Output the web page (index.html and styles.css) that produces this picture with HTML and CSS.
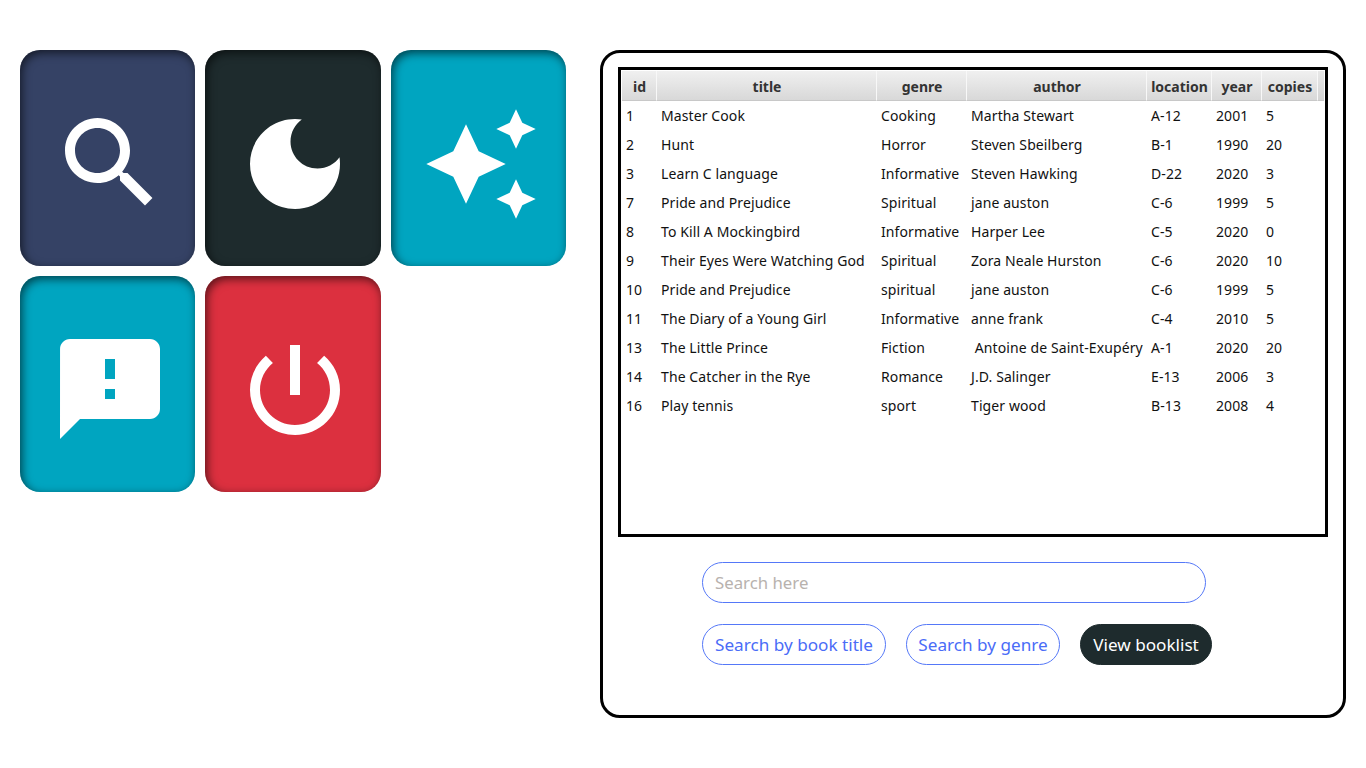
FILE: index.html
```html
<!DOCTYPE html>
<html lang="en">
<head>
<meta charset="utf-8">
<title>Library</title>
<link rel="stylesheet" href="styles.css">
</head>
<body>
<div class="app">
  <nav class="tiles">
    <a class="tile navy"><svg class="nudge" viewBox="0 0 24 24"><path d="M15.5 14h-.79l-.28-.27C15.41 12.59 16 11.11 16 9.5 16 5.91 13.09 3 9.5 3S3 5.91 3 9.5 5.91 16 9.5 16c1.61 0 3.09-.59 4.23-1.57l.27.28v.79l5 4.99L20.49 19l-4.99-5zm-6 0C7.01 14 5 11.99 5 9.5S7.01 5 9.5 5 14 7.01 14 9.5 11.99 14 9.5 14z"/></svg></a>
    <a class="tile dark"><svg viewBox="0 0 24 24"><path d="M12 3c-4.97 0-9 4.03-9 9s4.03 9 9 9 9-4.03 9-9c0-.46-.04-.92-.1-1.36-.98 1.37-2.58 2.26-4.4 2.26-2.98 0-5.4-2.42-5.4-5.4 0-1.81.89-3.42 2.26-4.4-.44-.06-.9-.1-1.36-.1z"/></svg></a>
    <a class="tile teal"><svg viewBox="0 0 120 120"><path d="M45 20.3 57.7 47.3 84.7 60 57.7 72.7 45 99.7 32.3 72.7 5.3 60 32.3 47.3zM95 5.3 101.3 18.7 114.7 25 101.3 31.3 95 44.7 88.7 31.3 75.3 25 88.7 18.7zM95 75.3 101.3 88.7 114.7 95 101.3 101.3 95 114.7 88.7 101.3 75.3 95 88.7 88.7z"/></svg></a>
    <a class="tile teal"><svg class="nudge" viewBox="0 0 24 24"><path d="M20 2H4c-1.1 0-1.99.9-1.99 2L2 22l4-4h14c1.1 0 2-.9 2-2V4c0-1.1-.9-2-2-2zm-7 12h-2v-2h2v2zm0-4h-2V6h2v4z"/></svg></a>
    <a class="tile red"><svg viewBox="0 0 24 24"><path d="M13 3h-2v10h2V3zm4.83 2.17l-1.42 1.42C17.99 7.86 19 9.81 19 12c0 3.87-3.13 7-7 7s-7-3.13-7-7c0-2.19 1.01-4.14 2.58-5.42L6.17 5.17C4.23 6.82 3 9.26 3 12c0 4.97 4.03 9 9 9s9-4.03 9-9c0-2.74-1.23-5.18-3.17-6.83z"/></svg></a>
  </nav>
  <main class="panel">
    <div class="frame">
      <table class="books">
        <colgroup>
          <col class="c-id"><col class="c-title"><col class="c-genre"><col class="c-author"><col class="c-loc"><col class="c-year"><col class="c-copies"><col>
        </colgroup>
        <thead>
          <tr><th>id</th><th>title</th><th>genre</th><th>author</th><th>location</th><th>year</th><th>copies</th><th></th></tr>
        </thead>
        <tbody>
          <tr><td>1</td><td>Master Cook</td><td>Cooking</td><td>Martha Stewart</td><td>A-12</td><td>2001</td><td>5</td><td></td></tr>
          <tr><td>2</td><td>Hunt</td><td>Horror</td><td>Steven Sbeilberg</td><td>B-1</td><td>1990</td><td>20</td><td></td></tr>
          <tr><td>3</td><td>Learn C language</td><td>Informative</td><td>Steven Hawking</td><td>D-22</td><td>2020</td><td>3</td><td></td></tr>
          <tr><td>7</td><td>Pride and Prejudice</td><td>Spiritual</td><td>jane auston</td><td>C-6</td><td>1999</td><td>5</td><td></td></tr>
          <tr><td>8</td><td>To Kill A Mockingbird</td><td>Informative</td><td>Harper Lee</td><td>C-5</td><td>2020</td><td>0</td><td></td></tr>
          <tr><td>9</td><td>Their Eyes Were Watching God</td><td>Spiritual</td><td>Zora Neale Hurston</td><td>C-6</td><td>2020</td><td>10</td><td></td></tr>
          <tr><td>10</td><td>Pride and Prejudice</td><td>spiritual</td><td>jane auston</td><td>C-6</td><td>1999</td><td>5</td><td></td></tr>
          <tr><td>11</td><td>The Diary of a Young Girl</td><td>Informative</td><td>anne frank</td><td>C-4</td><td>2010</td><td>5</td><td></td></tr>
          <tr><td>13</td><td>The Little Prince</td><td>Fiction</td><td> Antoine de Saint-Exupéry</td><td>A-1</td><td>2020</td><td>20</td><td></td></tr>
          <tr><td>14</td><td>The Catcher in the Rye</td><td>Romance</td><td>J.D. Salinger</td><td>E-13</td><td>2006</td><td>3</td><td></td></tr>
          <tr><td>16</td><td>Play tennis</td><td>sport</td><td>Tiger wood</td><td>B-13</td><td>2008</td><td>4</td><td></td></tr>
        </tbody>
      </table>
    </div>
    <form class="search">
      <input class="field" type="text" placeholder="Search here">
      <div class="actions">
        <button class="btn btn-title" type="button">Search by book title</button>
        <button class="btn btn-genre" type="button">Search by genre</button>
        <button class="btn btn-view" type="button">View booklist</button>
      </div>
    </form>
  </main>
</div>
</body>
</html>
```
FILE: styles.css
```css
* { box-sizing: border-box; }
html, body { margin: 0; height: 100%; background: #fff; overflow: hidden; }
body { font-family: "Noto Sans", "Open Sans", sans-serif; color: #111; }
.app { display: flex; gap: 34px; padding: 50px 20px; }
.tiles {
  width: 546px;
  display: grid;
  grid-template-columns: repeat(3, 1fr);
  grid-auto-rows: 216px;
  gap: 10px;
  align-content: start;
}
.tile {
  display: flex;
  align-items: center;
  justify-content: center;
  padding: 11px 0 0 5px;
  border-radius: 20px;
  box-shadow: inset 2px 3px 10px rgba(0, 0, 0, .6);
}
.tile svg { width: 120px; height: 120px; fill: #fff; flex: none; }
.tile .nudge { margin-top: -1px; }
.navy { background: #354265; }
.dark { background: #1e2b2d; }
.teal { background: #00a5c0; }
.red { background: #dc303f; }
.panel {
  width: 746px;
  height: 668px;
  border: 3px solid #000;
  border-radius: 20px;
  padding: 14px 15px;
}
.frame { height: 470px; border: 3px solid #000; padding: 1px; background: #fff; }
.books { width: 702px; border-collapse: separate; border-spacing: 0; table-layout: fixed; font-size: 14px; letter-spacing: .1px; }
.c-id { width: 35px; }
.c-title { width: 220px; }
.c-genre { width: 90px; }
.c-author { width: 180px; }
.c-loc { width: 65px; }
.c-year { width: 50px; }
.c-copies { width: 56px; }
.books th {
  height: 30px;
  padding: 2px 0 0 1px;
  font-size: 14px;
  font-weight: 700;
  letter-spacing: 0;
  color: #333;
  background: linear-gradient(#f0f0f0, #d8d8d8);
  border-right: 1px solid #f8f8f8;
  border-bottom: 1px solid #c8c8c8;
}
.books th:last-child { border-right: 0; background: linear-gradient(#e8e8e8, #d4d4d4); }
.books td { height: 29px; padding: 0 0 0 4px; white-space: pre; overflow: visible; }
.search { margin: 25px 0 0 84px; }
.field {
  display: block;
  width: 504px;
  height: 41px;
  padding: 0 12px;
  border: 1px solid #5578f8;
  border-radius: 21px;
  outline: none;
  font: 16.8px "Noto Sans", sans-serif;
}
.field::placeholder { color: #b8b2ae; opacity: 1; }
.actions { display: flex; gap: 20px; margin-top: 21px; }
.btn {
  height: 41px;
  padding: 0;
  border: 1px solid #5578f8;
  border-radius: 21px;
  background: #fff;
  color: #4a6cf7;
  font: 17.15px "Noto Sans", sans-serif;
}
.btn-title { width: 184px; }
.btn-genre { width: 154px; }
.btn-view { width: 132px; background: #1e2b2d; border-color: #1e2b2d; color: #fff; }
```
